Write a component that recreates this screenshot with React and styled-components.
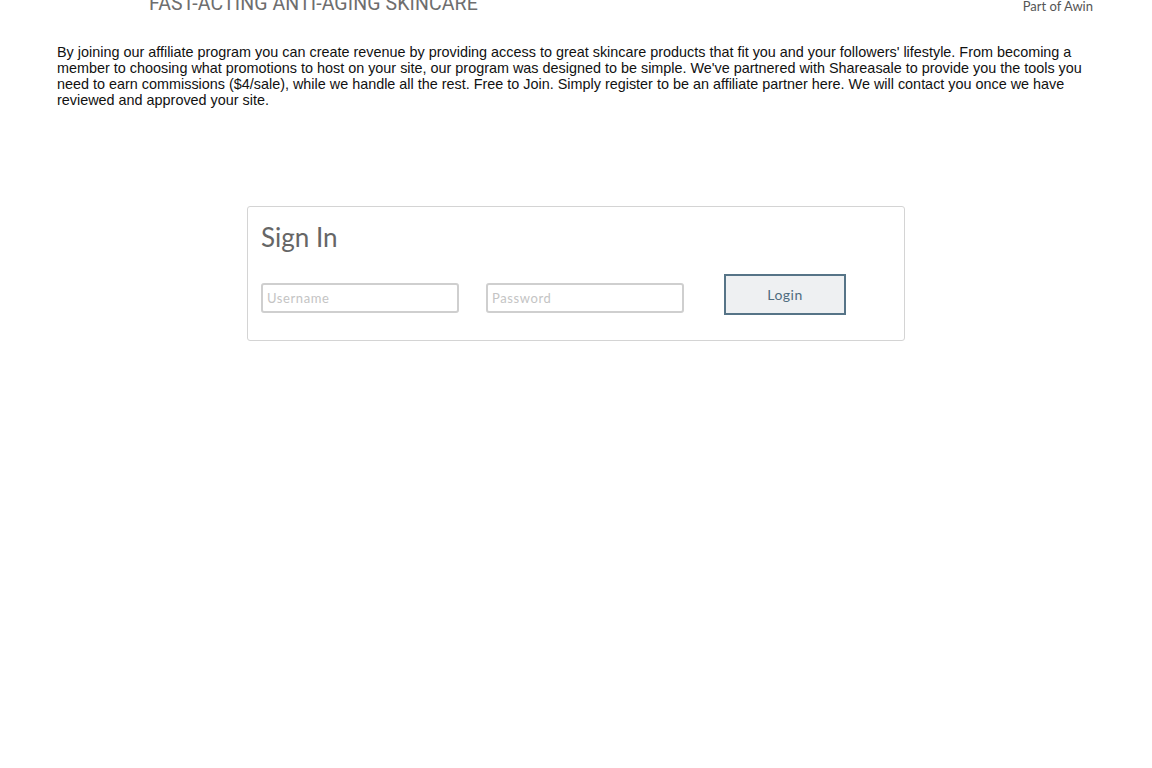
import React from "react";
import styled, { createGlobalStyle } from "styled-components";

const GlobalStyle = createGlobalStyle`
  html, body {
    margin: 0;
    padding: 0;
    background: #fff;
    overflow: hidden;
  }
`;

const Page = styled.div`
  width: 1152px;
  height: 768px;
  overflow: hidden;
`;

const Header = styled.header`
  display: flex;
  justify-content: space-between;
  align-items: flex-start;
  margin-top: -8px;
  padding: 0 59px 0 149px;
  height: 24px;
`;

const Tagline = styled.div`
  font-family: Roboto, "Liberation Sans", sans-serif;
  font-size: 19.5px;
  line-height: 24px;
  color: #6e6e6e;
  letter-spacing: 0.1px;
`;

const Awin = styled.div`
  font-family: Lato, "Open Sans", sans-serif;
  font-size: 13px;
  line-height: 14px;
  margin-top: 7px;
  color: #555;
`;

const Intro = styled.p`
  margin: 28px 0 0;
  padding: 0 60px 0 57px;
  font-family: "Liberation Sans", Arial, sans-serif;
  font-size: 14.4px;
  line-height: 16px;
  color: #111;
`;

const CardWrap = styled.div`
  display: flex;
  justify-content: center;
  padding-top: 98px;
`;

const Card = styled.section`
  width: 658px;
  box-sizing: border-box;
  border: 1px solid #d4d4d4;
  border-radius: 3px;
  padding: 15px 13px 25px;
`;

const Title = styled.h2`
  margin: 0 0 22px;
  font-family: Lato, "Noto Sans", sans-serif;
  font-weight: 400;
  font-size: 26px;
  line-height: 30px;
  color: #666;
`;

const Row = styled.div`
  display: flex;
  align-items: flex-start;
`;

const Field = styled.input`
  box-sizing: border-box;
  width: 198px;
  height: 30px;
  margin-top: 9px;
  margin-right: ${(p) => p.$gap}px;
  padding: 0 4px;
  border: 2px solid #cfcfcf;
  border-radius: 3px;
  font-family: Lato, "Noto Sans", sans-serif;
  font-size: 13px;
  letter-spacing: 0.6px;
  color: #444;
  outline: none;

  &::placeholder {
    color: #c4c4c4;
  }
`;

const LoginButton = styled.button`
  box-sizing: border-box;
  width: 122px;
  height: 41px;
  background: #eef0f2;
  border: 2px solid #567487;
  border-radius: 0;
  font-family: Lato, "Noto Sans", sans-serif;
  font-size: 14px;
  letter-spacing: 0.5px;
  color: #4f6c80;
  cursor: pointer;
`;

export default function App() {
  return (
    <Page>
      <GlobalStyle />
      <Header>
        <Tagline>FAST-ACTING ANTI-AGING SKINCARE</Tagline>
        <Awin>Part of Awin</Awin>
      </Header>
      <Intro>
        By joining our affiliate program you can create revenue by providing access to great skincare
        products that fit you and your followers' lifestyle. From becoming a member to choosing what
        promotions to host on your site, our program was designed to be simple. We've partnered with
        Shareasale to provide you the tools you need to earn commissions ($4/sale), while we handle all
        the rest. Free to Join. Simply register to be an affiliate partner here. We will contact you once
        we have reviewed and approved your site.
      </Intro>
      <CardWrap>
        <Card>
          <Title>Sign In</Title>
          <Row>
            <Field type="text" placeholder="Username" $gap={27} />
            <Field type="password" placeholder="Password" $gap={40} />
            <LoginButton type="button">Login</LoginButton>
          </Row>
        </Card>
      </CardWrap>
    </Page>
  );
}
